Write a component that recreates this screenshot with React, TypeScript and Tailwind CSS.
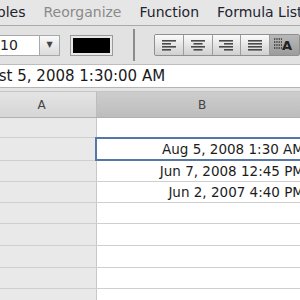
import React from 'react';

type Align = 'left' | 'center' | 'right' | 'justify';

const AlignIcon: React.FC<{ align: Align }> = ({ align }) => {
    const long = 14;
    const short = align === 'justify' ? 14 : 9;
    const widths = [long, short, long, short];
    return (
        <svg width="16" height="11" viewBox="0 0 16 11">
            {widths.map((w, i) => {
                let x = 1;
                if (align === 'center') x = 1 + (long - w) / 2;
                if (align === 'right') x = 1 + long - w;
                return <rect key={i} x={x} y={i * 3} width={w} height="1.6" fill="#4a4a4a" />;
            })}
        </svg>
    );
};

const rows: { h: string; text?: string; selected?: boolean }[] = [
    { h: 'h-[20px]' },
    { h: 'h-[23px]', text: 'Aug 5, 2008 1:30 AM', selected: true },
    { h: 'h-[21px]', text: 'Jun 7, 2008 12:45 PM' },
    { h: 'h-[21px]', text: 'Jun 2, 2007 4:40 PM' },
    { h: 'h-[21px]' },
    { h: 'h-[22px]' },
    { h: 'h-[22px]' },
    { h: 'h-[21px]' },
    { h: 'h-[21px]' },
];

export default function App() {
    return (
        <div className="w-[300px] h-[300px] overflow-hidden bg-[#e2e2e2] font-['DejaVu_Sans',sans-serif]">
            {/* menu bar */}
            <div className="h-[26px] border-b border-[#a9a9a9] bg-[#e6e6e6] flex items-center gap-[18px] ml-[-18px] text-[14px] whitespace-nowrap text-[#23232e]">
                <span>Tables</span>
                <span className="text-[#8a8a8a]">Reorganize</span>
                <span>Function</span>
                <span>Formula List</span>
            </div>

            {/* toolbar */}
            <div className="h-[39px] flex items-center border-b border-[#bdbdbd]">
                <div className="ml-[-20px] w-[62px] h-[21px] bg-white border border-[#a8a8a8] flex items-center pl-[19px] text-[14px] text-[#222]">
                    10
                </div>
                <div className="w-[20px] h-[21px] border border-l-0 border-[#a8a8a8] bg-gradient-to-b from-[#fafafa] to-[#dcdcdc] flex items-center justify-center text-[8px] text-[#444]">
                    ▼
                </div>
                <div className="ml-[10px] w-[45px] h-[21px] border border-[#9a9a9a] bg-[#e8e8e8] p-[2px]">
                    <div className="w-full h-full bg-black"></div>
                </div>
                <div className="ml-[20px] w-[2px] h-[32px] bg-[#8c8c8c]"></div>
                <div className="ml-[19px] flex h-[22px] border border-[#8f8f8f] rounded-[2px] overflow-hidden">
                    {(['left', 'center', 'right', 'justify'] as Align[]).map(a => (
                        <div key={a} className="w-[30px] h-full border-r border-[#9c9c9c] bg-gradient-to-b from-[#fbfbfb] to-[#d0d0d0] flex items-center justify-center">
                            <AlignIcon align={a} />
                        </div>
                    ))}
                    <div className="w-[30px] h-full bg-gradient-to-b from-[#b8b8b8] to-[#9c9c9c] flex items-center pl-[4px]">
                        <svg width="22" height="14" viewBox="0 0 22 14">
                            {[1, 4, 7, 10].map(y => (
                                <line key={y} x1="0" y1={y} x2="8" y2={y} stroke="#333" strokeWidth="1.3" strokeDasharray="1.3 1" />
                            ))}
                            <text x="8" y="12" fontSize="13" fontWeight="bold" fill="#222" fontFamily="DejaVu Sans">A</text>
                        </svg>
                    </div>
                </div>
            </div>

            {/* formula bar */}
            <div className="h-[23px] bg-white flex items-center overflow-hidden whitespace-nowrap border-b border-[#b5b5b5]">
                <span className="ml-[-40px] text-[15px] text-[#1a1a1a]">August 5, 2008 1:30:00 AM</span>
            </div>
            <div className="h-[4px] bg-[#e4e4e4] border-b border-[#c4c4c4]"></div>

            {/* table */}
            <div className="ml-[-13px] w-[320px]">
                <div className="grid grid-cols-[110px_210px] h-[26px] border-b border-[#b0b0b0] text-[12px] text-[#444]">
                    <div className="bg-gradient-to-b from-[#e4e4e4] to-[#d6d6d6] border-r border-[#bdbdbd] flex items-center justify-center">A</div>
                    <div className="bg-gradient-to-b from-[#cdcdcd] to-[#bdbdbd] flex items-center justify-center">B</div>
                </div>
                {rows.map((r, i) => (
                    <div key={i} className={`grid grid-cols-[110px_210px] ${r.h} border-b border-[#cfcfcf]`}>
                        <div className="bg-[#e9e9e9] border-r border-[#c8c8c8]"></div>
                        <div className={`bg-white flex items-center justify-end pr-[3px] text-[13.5px] text-[#1c1c1c] whitespace-nowrap ${r.selected ? 'outline-2 outline-[#5676a8] -outline-offset-1 ml-[-1px]' : ''}`}>
                            {r.text}
                        </div>
                    </div>
                ))}
            </div>
        </div>
    );
}
